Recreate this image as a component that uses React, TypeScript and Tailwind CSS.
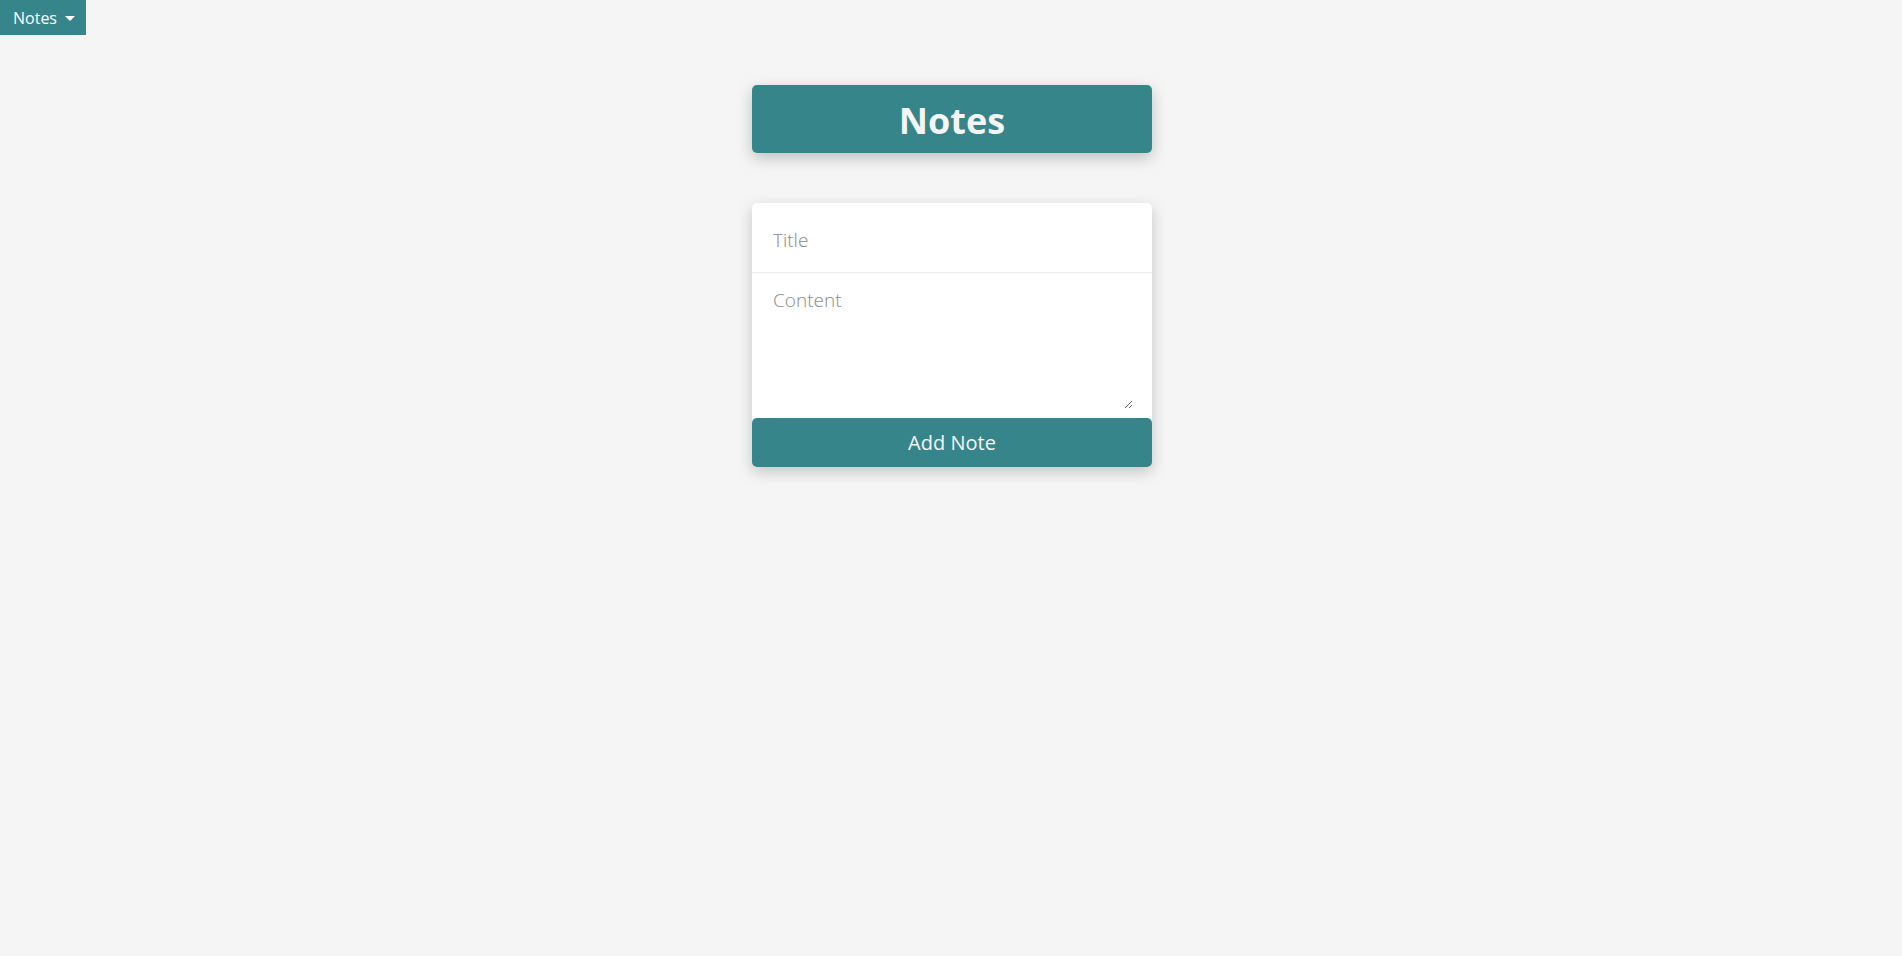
import React, { useState } from 'react';

const App: React.FC = () => {
  const [title, setTitle] = useState('');
  const [content, setContent] = useState('');

  return (
    <div className="min-h-[956px] bg-[#f5f5f5] font-['Open_Sans',sans-serif]">
      {/* Dropdown toggle */}
      <button className="flex h-[35px] w-[86px] items-center gap-[8px] bg-[#36858a] pl-[13px] text-[16px] text-white">
        Notes
        <span className="mt-[2px] h-0 w-0 border-x-[5px] border-t-[5px] border-x-transparent border-t-white" />
      </button>

      <div className="pl-[2px]">
        <div className="mx-auto mt-[50px] w-[400px]">
          {/* Header */}
          <div className="flex h-[68px] items-center justify-center rounded-[5px] bg-[#36858a] pt-[4px] shadow-[0_5px_15px_rgba(0,0,0,0.22)]">
            <h1 className="text-[36px] font-bold text-[#f5f5f5]">Notes</h1>
          </div>

          {/* Form */}
          <form
            className="mt-[50px] flex flex-col rounded-[5px] bg-white shadow-[0_5px_15px_rgba(0,0,0,0.2)]"
            onSubmit={(e) => {
              e.preventDefault();
              setTitle('');
              setContent('');
            }}
          >
            <input
              value={title}
              onChange={(e) => setTitle(e.target.value)}
              placeholder="Title"
              className="h-[70px] rounded-t-[5px] border-b border-[#ededed] px-[21px] pt-[4px] text-[19px] font-light outline-none placeholder:text-[#8a8a8a]"
            />
            <textarea
              value={content}
              onChange={(e) => setContent(e.target.value)}
              placeholder="Content"
              className="mr-[19px] mb-[9px] h-[136px] pl-[21px] pt-[13px] text-[19px] font-light outline-none placeholder:text-[#8a8a8a]"
            />
            <button
              type="submit"
              className="h-[49px] rounded-[5px] bg-[#36858a] text-[20px] text-[#f5f5f5]"
            >
              Add Note
            </button>
          </form>
        </div>
      </div>
    </div>
  );
};

export default App;
